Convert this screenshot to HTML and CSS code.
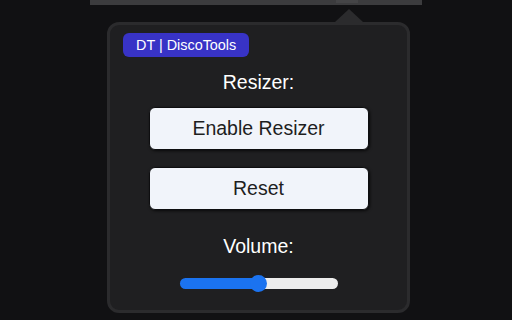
FILE: index.html
```html
<!DOCTYPE html>
<html lang="en">
  <head>
    <meta charset="UTF-8" />
    <meta name="viewport" content="width=device-width, initial-scale=1.0" />
    <title>DiscoTools</title>
    <link rel="stylesheet" href="styles.css">
  </head>
  <body>
    <div class="toolbar">
      <div class="toolbar-tab"></div>
    </div>

    <div class="popup">
      <div class="popup-arrow"></div>
      <div class="badge">DT | DiscoTools</div>

      <div class="section-title">Resizer:</div>
      <button class="action-btn" id="enable-resizer">Enable Resizer</button>
      <button class="action-btn" id="reset">Reset</button>

      <div class="section-title volume-title">Volume:</div>
      <input type="range" class="volume" id="volume" min="0" max="100" value="50" />
    </div>
  </body>
</html>
```

FILE: styles.css
```css
body {
  margin: 0;
  padding: 0;
  background-color: #111113;
  font-family: "Liberation Sans", Arial, sans-serif;
  color: white;
}
.toolbar {
  margin-left: 90px;
  width: 332px;
  height: 5px;
  background-color: #3c3c3e;
  position: relative;
}
.toolbar-tab {
  position: absolute;
  left: 246px;
  top: 0;
  width: 22px;
  height: 3px;
  background-color: #454547;
}
.popup {
  position: relative;
  box-sizing: border-box;
  margin-top: 17px;
  margin-left: 107px;
  width: 303px;
  height: 291px;
  padding: 8px 13px 0;
  background-color: #1f1f21;
  border: 3px solid #2b2b2d;
  border-radius: 12px;
  display: flex;
  flex-direction: column;
  align-items: center;
}
.popup-arrow {
  position: absolute;
  top: -16px;
  left: 225px;
  width: 0;
  height: 0;
  border-left: 14px solid transparent;
  border-right: 14px solid transparent;
  border-bottom: 13px solid #2b2b2d;
}
.badge {
  align-self: flex-start;
  background-color: #3833c6;
  color: white;
  font-size: 14.4px;
  line-height: 24px;
  height: 24px;
  padding: 0 13px;
  border-radius: 6px;
}
.section-title {
  font-size: 19.5px;
  line-height: 22px;
  margin-top: 14px;
  margin-bottom: 14px;
}
.volume-title {
  margin-top: 25px;
  margin-bottom: 17px;
}
.action-btn {
  box-sizing: border-box;
  width: 220px;
  height: 43px;
  margin-bottom: 17px;
  background-color: #f1f4fa;
  color: #1e1e1e;
  border: 1px solid #0e0e10;
  border-radius: 6px;
  box-shadow: 1px 1px 3px rgba(0, 0, 0, 0.7);
  font-family: "Liberation Sans", Arial, sans-serif;
  font-size: 19.5px;
  cursor: pointer;
}
.action-btn:last-of-type {
  margin-bottom: 0;
}
.volume {
  -webkit-appearance: none;
  appearance: none;
  width: 158px;
  height: 11px;
  margin: 4px 0 0;
  border-radius: 6px;
  background: linear-gradient(to right, #1b73f0 50%, #ededed 50%);
  outline: none;
}
.volume::-webkit-slider-thumb {
  -webkit-appearance: none;
  appearance: none;
  width: 17px;
  height: 17px;
  border-radius: 50%;
  background-color: #1b73f0;
  cursor: pointer;
}
```
